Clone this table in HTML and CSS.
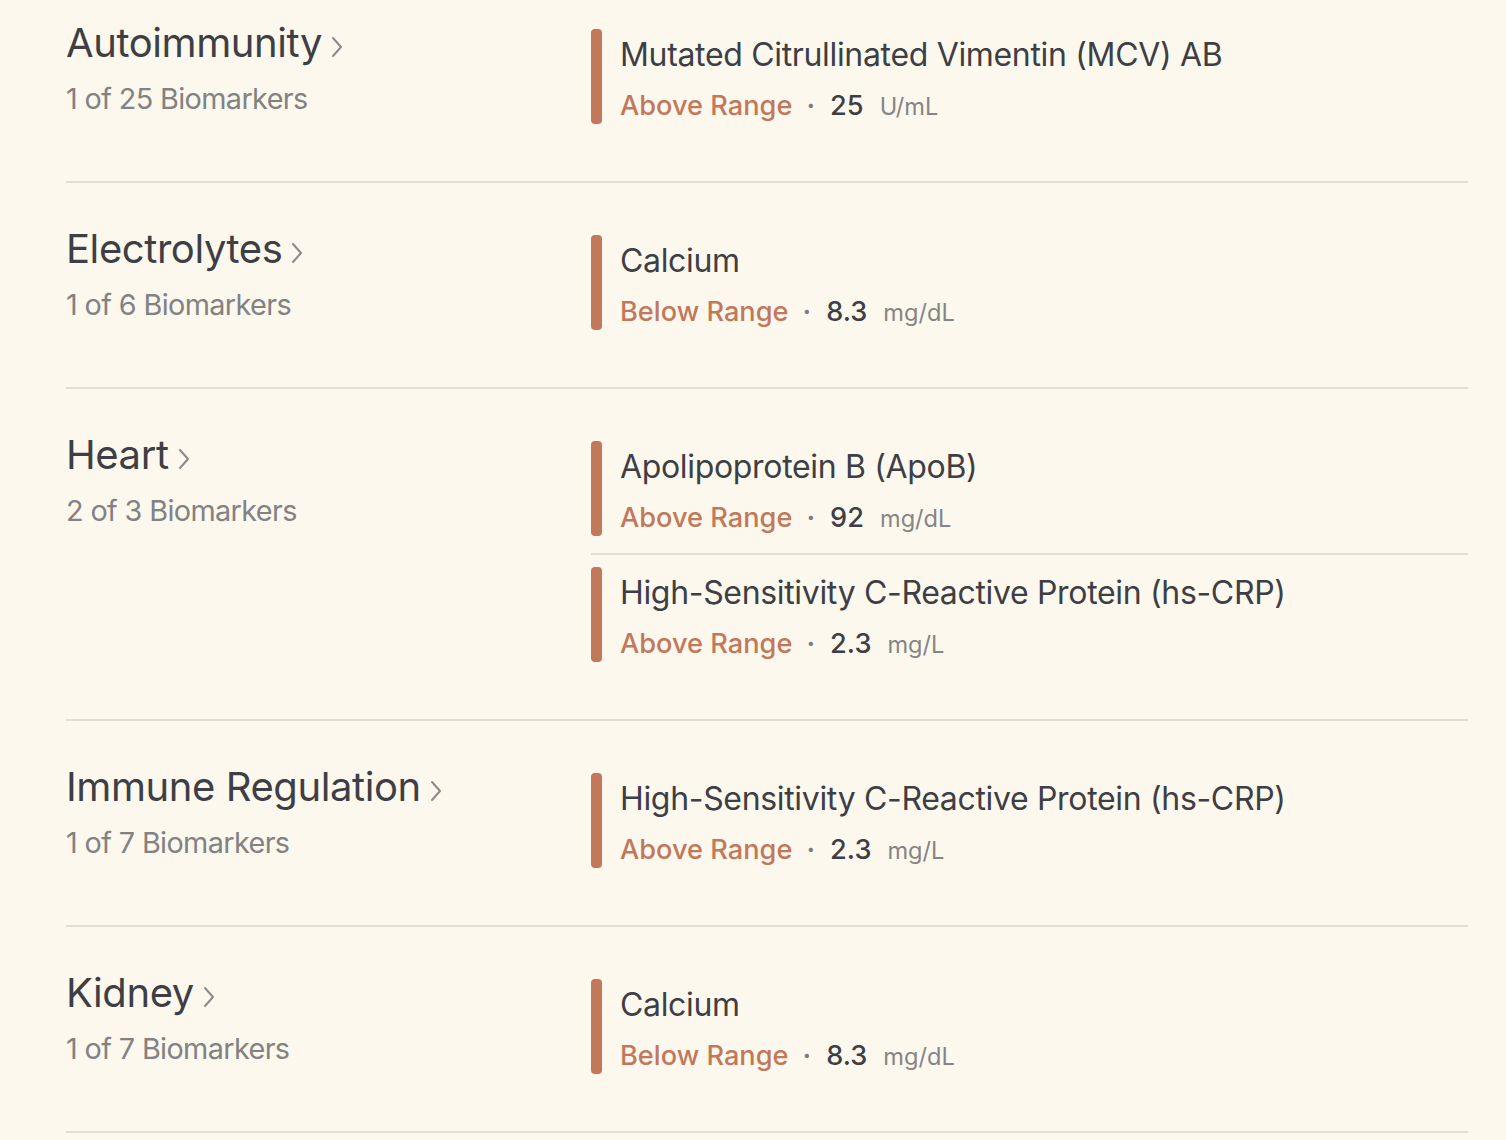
FILE: index.html
```html
<!DOCTYPE html>
<html lang="en">
<head>
<meta charset="utf-8">
<title>Biomarkers</title>
<link rel="stylesheet" href="styles.css">
</head>
<body>
<main class="list">
  <section class="group">
    <div class="group-head">
      <h2 class="group-title">Autoimmunity<svg class="chev" viewBox="0 0 12 22" width="12" height="22"><polyline points="2,2 10,11 2,20"/></svg></h2>
      <p class="group-count">1 of 25 Biomarkers</p>
    </div>
    <div class="items">
      <div class="item">
        <span class="bar"></span>
        <div class="item-body">
          <div class="item-name">Mutated Citrullinated Vimentin (MCV) AB</div>
          <div class="item-status"><span class="range">Above Range</span><span class="dot">·</span><span class="value">25</span><span class="unit">U/mL</span></div>
        </div>
      </div>
    </div>
  </section>

  <section class="group">
    <div class="group-head">
      <h2 class="group-title">Electrolytes<svg class="chev" viewBox="0 0 12 22" width="12" height="22"><polyline points="2,2 10,11 2,20"/></svg></h2>
      <p class="group-count">1 of 6 Biomarkers</p>
    </div>
    <div class="items">
      <div class="item">
        <span class="bar"></span>
        <div class="item-body">
          <div class="item-name">Calcium</div>
          <div class="item-status"><span class="range">Below Range</span><span class="dot">·</span><span class="value">8.3</span><span class="unit">mg/dL</span></div>
        </div>
      </div>
    </div>
  </section>

  <section class="group">
    <div class="group-head">
      <h2 class="group-title">Heart<svg class="chev" viewBox="0 0 12 22" width="12" height="22"><polyline points="2,2 10,11 2,20"/></svg></h2>
      <p class="group-count">2 of 3 Biomarkers</p>
    </div>
    <div class="items">
      <div class="item">
        <span class="bar"></span>
        <div class="item-body">
          <div class="item-name">Apolipoprotein B (ApoB)</div>
          <div class="item-status"><span class="range">Above Range</span><span class="dot">·</span><span class="value">92</span><span class="unit">mg/dL</span></div>
        </div>
      </div>
      <div class="item">
        <span class="bar"></span>
        <div class="item-body">
          <div class="item-name">High-Sensitivity C-Reactive Protein (hs-CRP)</div>
          <div class="item-status"><span class="range">Above Range</span><span class="dot">·</span><span class="value">2.3</span><span class="unit">mg/L</span></div>
        </div>
      </div>
    </div>
  </section>

  <section class="group">
    <div class="group-head">
      <h2 class="group-title">Immune Regulation<svg class="chev" viewBox="0 0 12 22" width="12" height="22"><polyline points="2,2 10,11 2,20"/></svg></h2>
      <p class="group-count">1 of 7 Biomarkers</p>
    </div>
    <div class="items">
      <div class="item">
        <span class="bar"></span>
        <div class="item-body">
          <div class="item-name">High-Sensitivity C-Reactive Protein (hs-CRP)</div>
          <div class="item-status"><span class="range">Above Range</span><span class="dot">·</span><span class="value">2.3</span><span class="unit">mg/L</span></div>
        </div>
      </div>
    </div>
  </section>

  <section class="group">
    <div class="group-head">
      <h2 class="group-title">Kidney<svg class="chev" viewBox="0 0 12 22" width="12" height="22"><polyline points="2,2 10,11 2,20"/></svg></h2>
      <p class="group-count">1 of 7 Biomarkers</p>
    </div>
    <div class="items">
      <div class="item">
        <span class="bar"></span>
        <div class="item-body">
          <div class="item-name">Calcium</div>
          <div class="item-status"><span class="range">Below Range</span><span class="dot">·</span><span class="value">8.3</span><span class="unit">mg/dL</span></div>
        </div>
      </div>
    </div>
  </section>
</main>
</body>
</html>
```

FILE: styles.css
```css
html, body {
  margin: 0;
  padding: 0;
  background: #fdf8ee;
}

body {
  font-family: Inter, "Noto Sans", "Liberation Sans", sans-serif;
  color: #3d3f45;
}

.list {
  margin-left: 66px;
  width: 1402px;
}

.group {
  display: grid;
  grid-template-columns: 525px 1fr;
  padding: 42px 0 57px;
  border-bottom: 2px solid #e3ded3;
}

.group:first-child {
  padding-top: 19px;
}

.group-head {
  min-width: 0;
}

.group-title {
  margin: 0;
  font-size: 40px;
  font-weight: 400;
  line-height: 48px;
  letter-spacing: -0.42px;
  color: #3d3f45;
  display: flex;
  align-items: center;
}

.chev {
  margin-left: 9px;
  margin-top: 8px;
  fill: none;
  stroke: #8a8a8a;
  stroke-width: 2;
  stroke-linecap: round;
  stroke-linejoin: round;
}

.group-count {
  margin: 10px 0 0;
  font-size: 28.8px;
  line-height: 43px;
  letter-spacing: -0.62px;
  color: #828282;
}

.items {
  padding-top: 10px;
}

.item {
  display: flex;
  align-items: stretch;
}

.item + .item {
  margin-top: 17px;
  border-top: 2px solid #e3ded3;
  padding-top: 12px;
}

.bar {
  flex: none;
  width: 11px;
  border-radius: 4px;
  background: #c2785a;
}

.item-body {
  padding-left: 18px;
}

.item-name {
  padding-top: 2px;
  font-size: 32px;
  line-height: 48px;
  letter-spacing: -0.33px;
  color: #3d3f45;
}

.item-status {
  margin-top: 7px;
  height: 38px;
  font-size: 27.2px;
  line-height: 39px;
  display: flex;
  align-items: baseline;
}

.range {
  color: #c2785a;
  font-weight: 500;
}

.dot {
  color: #7d7d7d;
  margin: 0 15px 0 14px;
  font-weight: 600;
}

.value {
  color: #3d3f45;
  font-weight: 500;
}

.unit {
  color: #858585;
  font-size: 23.6px;
  line-height: 1;
  margin-left: 16px;
}
```
